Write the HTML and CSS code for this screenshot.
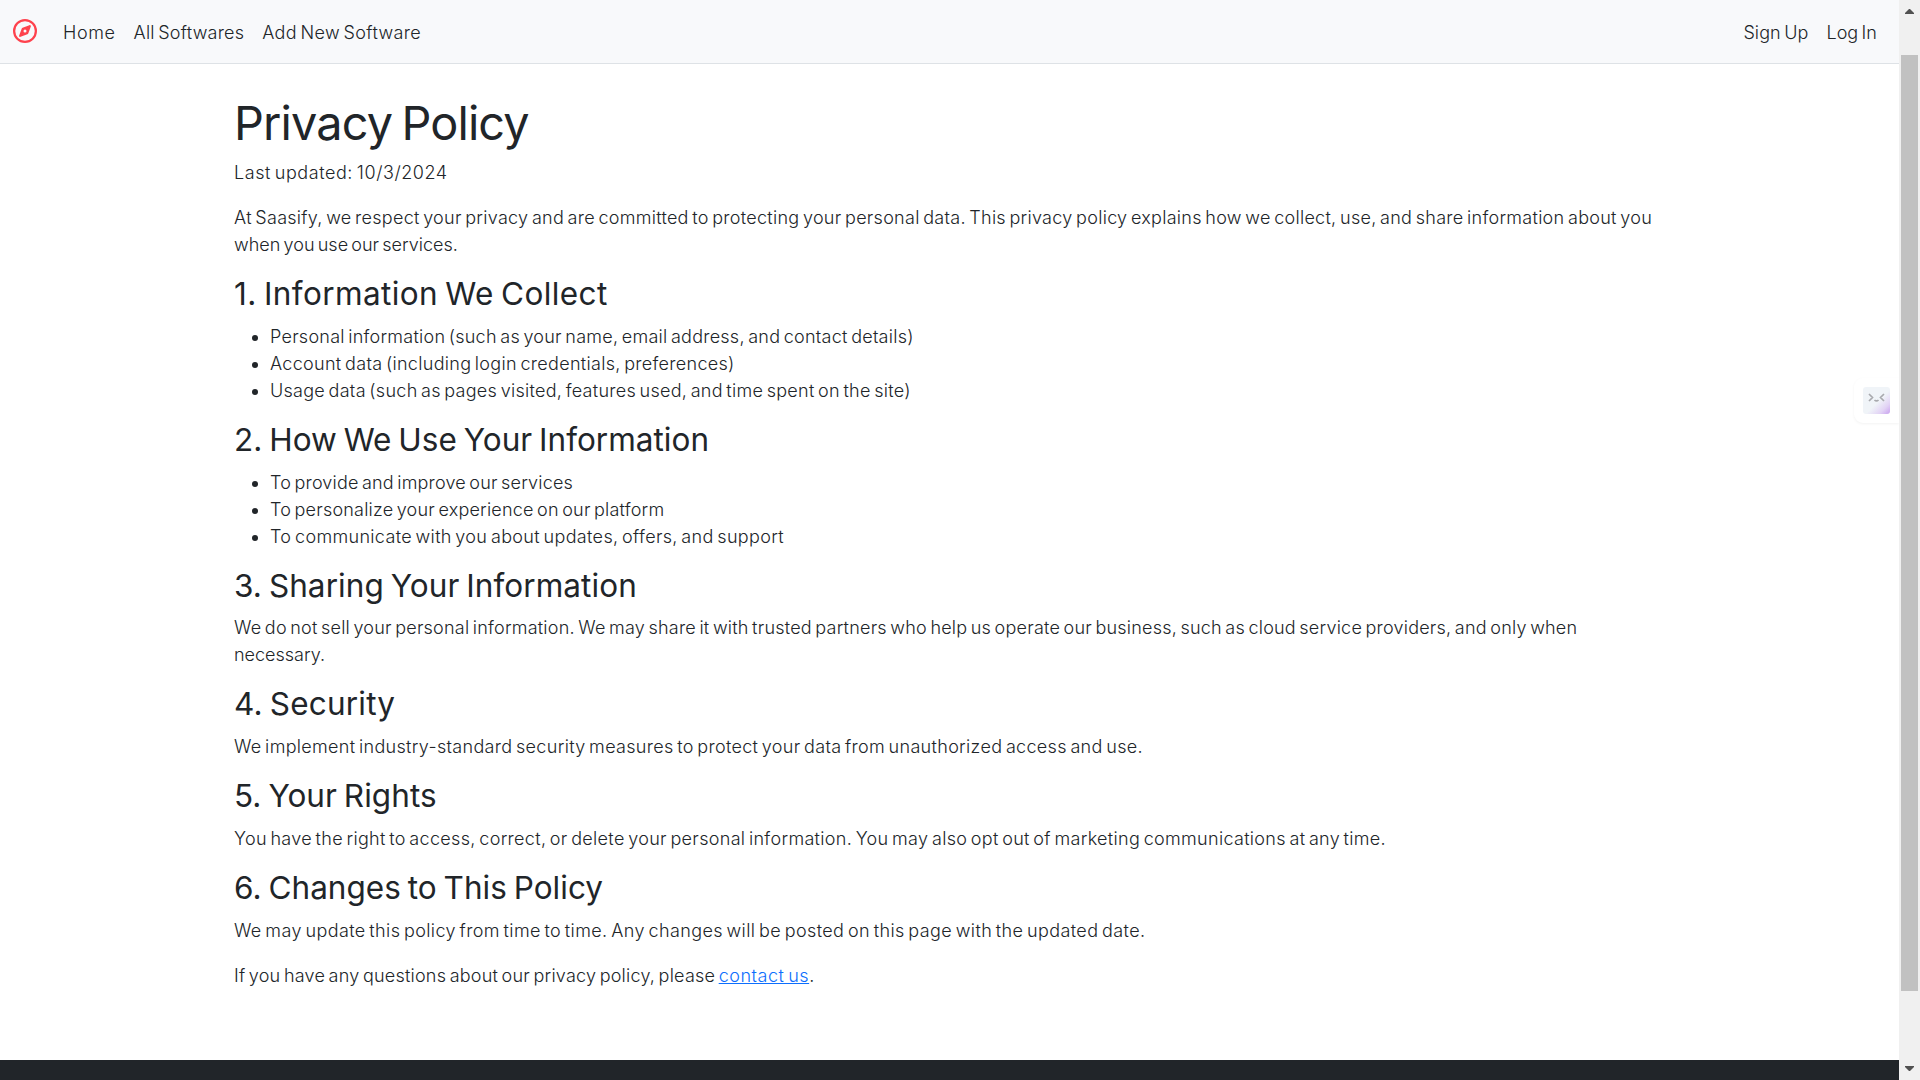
FILE: index.html
```
<!DOCTYPE html>
<html lang="en">
<head>
<meta charset="utf-8">
<title>Privacy Policy</title>
<link rel="stylesheet" href="styles.css">
</head>
<body>
<div class="page">
  <nav class="navbar">
    <a class="brand" aria-label="Saasify">
      <svg width="24" height="24" viewBox="0 0 512 512" fill="#fe424d"><path d="M464 256A208 208 0 1 0 48 256a208 208 0 1 0 416 0zM0 256a256 256 0 1 1 512 0A256 256 0 1 1 0 256zm306.700 69.100L162.400 380.600c-19.400 7.500-38.500-11.600-31-31l55.500-144.300c3.300-8.500 9.900-15.100 18.400-18.400l144.300-55.500c19.400-7.500 38.500 11.600 31 31L325.100 306.700c-3.200 8.500-9.900 15.100-18.400 18.400zM288 256a32 32 0 1 0-64 0 32 32 0 1 0 64 0z"/></svg>
    </a>
    <div class="links">
      <a class="home">Home</a>
      <a class="all">All Softwares</a>
      <a class="add">Add New Software</a>
    </div>
    <div class="links account">
      <a class="signup">Sign Up</a>
      <a class="login">Log In</a>
    </div>
  </nav>
  <main class="content">
    <h1>Privacy Policy</h1>
    <p class="updated">Last updated: 10/3/2024</p>
    <p><span class="intro-a">At Saasify, we respect your privacy and are committed to protecting your personal data. This privacy policy explains how we collect, use, and share information about you</span><br><span class="intro-b">when you use our services.</span></p>
    <h2 class="h-collect">1. Information We Collect</h2>
    <ul>
      <li class="personal">Personal information (such as your name, email address, and contact details)</li>
      <li class="accounts">Account data (including login credentials, preferences)</li>
      <li class="usage">Usage data (such as pages visited, features used, and time spent on the site)</li>
    </ul>
    <h2 class="h-use">2. How We Use Your Information</h2>
    <ul>
      <li class="provide">To provide and improve our services</li>
      <li class="personalize">To personalize your experience on our platform</li>
      <li class="communicate">To communicate with you about updates, offers, and support</li>
    </ul>
    <h2 class="h-share">3. Sharing Your Information</h2>
    <p><span class="sharing">We do not sell your personal information. We may share it with trusted partners who help us operate our business, such as cloud service providers, and only when</span><br>necessary.</p>
    <h2 class="h-security">4. Security</h2>
    <p class="security">We implement industry-standard security measures to protect your data from unauthorized access and use.</p>
    <h2 class="h-rights">5. Your Rights</h2>
    <p class="rights">You have the right to access, correct, or delete your personal information. You may also opt out of marketing communications at any time.</p>
    <h2 class="h-changes">6. Changes to This Policy</h2>
    <p class="changes">We may update this policy from time to time. Any changes will be posted on this page with the updated date.</p>
    <p class="questions">If you have any questions about our privacy policy, please <a class="contact">contact us</a>.</p>
  </main>
  <footer class="footer"></footer>
</div>
<div class="scrollbar">
  <svg class="arrow" width="9" height="5" viewBox="0 0 9 5" fill="#505050"><path d="M4 0h1l4 4v1H0V4z"/></svg>
  <div class="track"><div class="thumb"></div></div>
  <svg class="arrow" width="9" height="5" viewBox="0 0 9 5" fill="#505050"><path d="M0 0h9v1L5 5H4L0 1z"/></svg>
</div>
<div class="assistant">
  <div class="face">
    <svg width="27" height="27" viewBox="0 0 27 27" fill="none" stroke="#a9aaae" stroke-width="1.700"><path d="M6 7l3.500 3.500L6 14M21 7l-3.500 3.500L21 14M11.500 13q2 2 4 0"/></svg>
  </div>
</div>
</body>
</html>
```
FILE: styles.css
```
* { box-sizing: border-box; }
body {
  margin: 0;
  height: 1080px;
  overflow: hidden;
  display: flex;
  position: relative;
  background: #fff;
  color: #212529;
  font: 300 18px/27px Inter, sans-serif;
  word-spacing: -1.8px;
}
.page { flex: 1; height: 1080px; display: flex; flex-direction: column; }
.navbar {
  height: 64px;
  flex: none;
  display: flex;
  align-items: center;
  padding: 0 22px 0 13px;
  background: #f8f9fb;
  border-bottom: 1px solid #dee2e6;
}
.brand { display: flex; width: 50px; padding-bottom: 1px; }
.links { display: flex; gap: 18px; padding-top: 2px; white-space: nowrap; }
.account { margin-left: auto; }
.content { flex: 1; padding: 32px 234px 0; white-space: nowrap; }
h1, h2 { margin: 0 0 9px; font-weight: 400; }
h1 { font-size: 46.8px; line-height: 54px; letter-spacing: -.85px; word-spacing: -3px; }
h2 { margin: -1px 0 10px; font-size: 31.5px; line-height: 37.8px; word-spacing: -2px; }
p { margin: 0 0 18px; }
ul { margin: 0 0 18px; padding-left: 36px; }
.footer { height: 20px; flex: none; background: #212529; }

/* Tracking per line */
.home { letter-spacing: .6px; }
.all { letter-spacing: .22px; }
.add { letter-spacing: .34px; }
.signup { letter-spacing: .1px; }
.login { letter-spacing: .05px; }
.updated { letter-spacing: .56px; }
.intro-a { letter-spacing: .278px; }
.intro-b { letter-spacing: 0; }
.h-collect { letter-spacing: .39px; }
.personal { letter-spacing: .245px; }
.accounts { letter-spacing: .3px; }
.usage { letter-spacing: .273px; }
.h-use { letter-spacing: .02px; }
.provide { letter-spacing: .18px; }
.personalize { letter-spacing: .2px; }
.communicate { letter-spacing: .336px; }
.h-share { letter-spacing: .07px; }
.sharing { letter-spacing: .216px; }
.h-security { letter-spacing: .2px; }
.security { letter-spacing: .315px; }
.h-rights { letter-spacing: .05px; }
.rights { letter-spacing: .315px; }
.h-changes { letter-spacing: .02px; }
.changes { letter-spacing: .39px; }
.questions { letter-spacing: .22px; }
.contact { letter-spacing: .52px; color: #0d6efd; text-decoration: underline; }

.scrollbar {
  width: 21px;
  height: 1080px;
  display: flex;
  flex-direction: column;
  align-items: center;
  padding: 9px 0;
  background: #f0f0f0;
}
.arrow { flex: none; }
.track { flex: 1; padding-top: 41px; }
.thumb { width: 17px; height: 936px; background: #c1c1c1; }

.assistant {
  position: absolute;
  left: 1854px;
  top: 378px;
  width: 45px;
  height: 45px;
  padding: 9px;
  background: #fff;
  border-radius: 9px 0 0 9px;
  box-shadow: 0 1px 3px rgba(0, 0, 0, .05);
  clip-path: inset(-8px 0 -8px -8px);
}
.face {
  width: 27px;
  height: 27px;
  border-radius: 3px;
  background: linear-gradient(135deg, #f0f4f8 55%, #e2d3f5 80%, #c8a0ef);
}
```
